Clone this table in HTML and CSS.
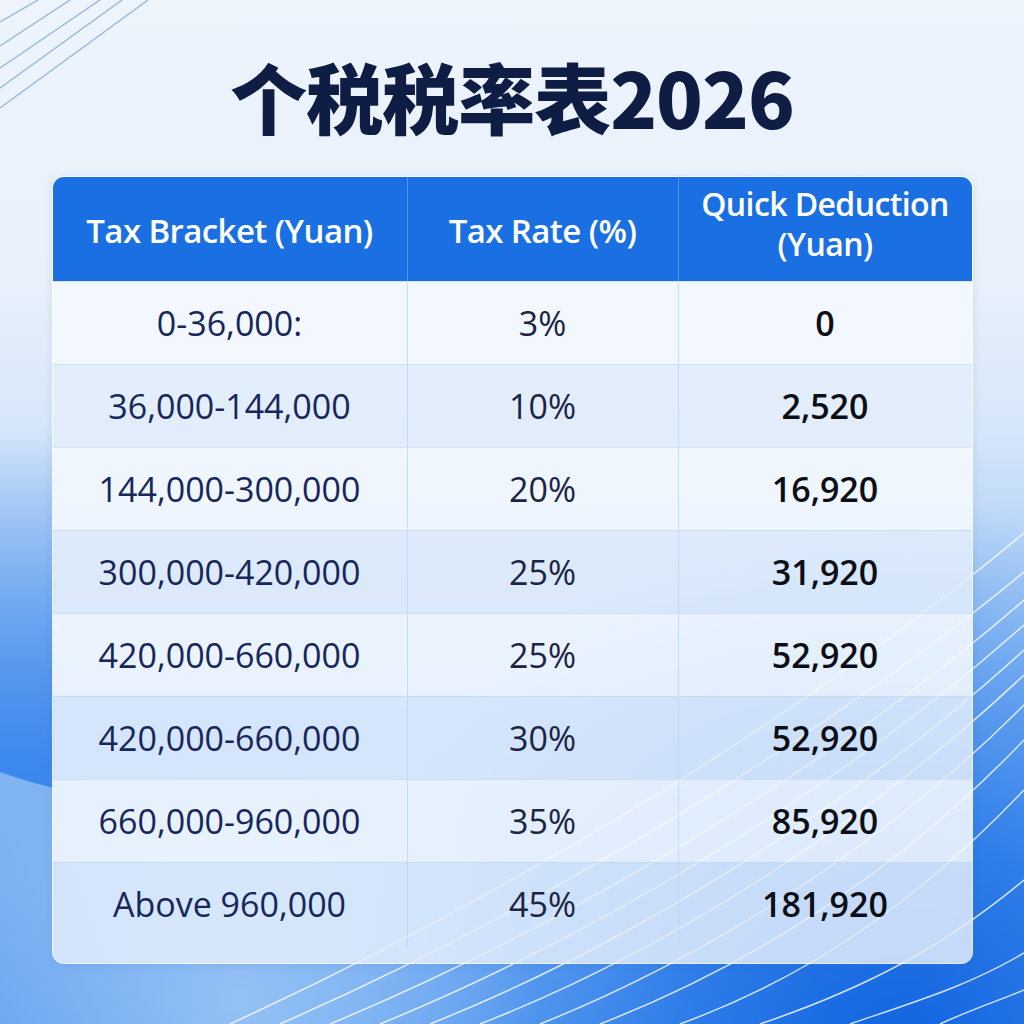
FILE: index.html
```html
<!DOCTYPE html>
<html lang="zh">
<head>
<meta charset="utf-8">
<title>个税税率表2026</title>
<link rel="stylesheet" href="styles.css">
</head>
<body>
<div class="page">
  <svg class="bg-art" width="1024" height="1024" viewBox="0 0 1024 1024" aria-hidden="true">
    <defs>
      <radialGradient id="br" cx="900" cy="1060" r="560" gradientUnits="userSpaceOnUse">
        <stop offset="0" stop-color="#0f62e0"/>
        <stop offset="0.4" stop-color="#2f7de9"/>
        <stop offset="1" stop-color="#4c95f0" stop-opacity="0"/>
      </radialGradient>
      <radialGradient id="bl" cx="240" cy="1000" r="300" gradientUnits="userSpaceOnUse">
        <stop offset="0" stop-color="#94c1f5"/>
        <stop offset="1" stop-color="#94c1f5" stop-opacity="0"/>
      </radialGradient>
      <linearGradient id="wedge" x1="0" y1="430" x2="0" y2="785" gradientUnits="userSpaceOnUse">
        <stop offset="0" stop-color="#3a86ec" stop-opacity="0"/>
        <stop offset="1" stop-color="#3a86ec"/>
      </linearGradient>
    </defs>
    <rect x="0" y="0" width="1024" height="1024" fill="url(#br)"/>
    <path d="M0 430 L54 430 L54 788 Q 28 782, 0 772 Z" fill="url(#wedge)"/>
    <rect x="0" y="0" width="1024" height="1024" fill="url(#bl)"/>
    <g fill="none" stroke="#8fb3e6" stroke-width="1.3">
      <path d="M0 22 L38 0"/>
      <path d="M0 46 L70 0"/>
      <path d="M0 68 L100 0"/>
      <path d="M0 88 L122 0"/>
      <path d="M0 108 L148 0"/>
    </g>
    <g fill="none" stroke="#ffffff" stroke-width="1.5" opacity="0.8">
      <path d="M230 1024 C 500 900, 800 720, 1024 533"/>
      <path d="M280 1024 C 540 910, 820 740, 1024 572"/>
      <path d="M330 1024 C 580 920, 840 760, 1024 600"/>
      <path d="M380 1024 C 610 930, 850 780, 1024 625"/>
      <path d="M430 1024 C 640 940, 860 800, 1024 650"/>
      <path d="M480 1024 C 670 950, 870 820, 1024 675"/>
      <path d="M540 1024 C 700 960, 880 850, 1024 705"/>
      <path d="M600 1024 C 740 970, 890 880, 1024 740"/>
      <path d="M680 1024 C 800 980, 910 910, 1024 790"/>
      <path d="M760 1024 C 860 990, 940 950, 1024 880"/>
      <path d="M850 1024 C 920 1000, 970 985, 1024 953"/>
      <path d="M940 1024 C 970 1010, 1000 1000, 1024 990"/>
    </g>
  </svg>

  <h1 class="title">个税税率表2026</h1>

  <div class="table">
    <div class="row head">
      <div class="cell c1">Tax Bracket (Yuan)</div>
      <div class="cell c2">Tax Rate (%)</div>
      <div class="cell c3 stack"><span>Quick Deduction</span><span>(Yuan)</span></div>
    </div>
    <div class="row odd">
      <div class="cell c1">0-36,000:</div>
      <div class="cell c2">3%</div>
      <div class="cell c3">0</div>
    </div>
    <div class="row even">
      <div class="cell c1">36,000-144,000</div>
      <div class="cell c2">10%</div>
      <div class="cell c3">2,520</div>
    </div>
    <div class="row odd">
      <div class="cell c1">144,000-300,000</div>
      <div class="cell c2">20%</div>
      <div class="cell c3">16,920</div>
    </div>
    <div class="row even">
      <div class="cell c1">300,000-420,000</div>
      <div class="cell c2">25%</div>
      <div class="cell c3">31,920</div>
    </div>
    <div class="row odd">
      <div class="cell c1">420,000-660,000</div>
      <div class="cell c2">25%</div>
      <div class="cell c3">52,920</div>
    </div>
    <div class="row even">
      <div class="cell c1">420,000-660,000</div>
      <div class="cell c2">30%</div>
      <div class="cell c3">52,920</div>
    </div>
    <div class="row odd">
      <div class="cell c1">660,000-960,000</div>
      <div class="cell c2">35%</div>
      <div class="cell c3">85,920</div>
    </div>
    <div class="row even last">
      <div class="cell c1">Above 960,000</div>
      <div class="cell c2">45%</div>
      <div class="cell c3">181,920</div>
    </div>
  </div>
</div>
</body>
</html>
```
FILE: styles.css
```css
html, body {
  margin: 0;
  padding: 0;
}
body {
  width: 1024px;
  height: 1024px;
  overflow: hidden;
  font-family: "Open Sans", "Noto Sans", "Noto Sans CJK SC", sans-serif;
}
.page {
  position: relative;
  width: 1024px;
  height: 1024px;
  background: linear-gradient(180deg, #edf4fc 0%, #e8f0fb 28%, #d6e6fa 42%, #b0d0f6 56%, #86b6f2 70%, #7ab0f2 86%, #66a3f0 100%);
  display: flex;
  flex-direction: column;
  align-items: center;
  box-sizing: border-box;
  padding-top: 48px;
}
.bg-art {
  position: absolute;
  left: 0;
  top: 0;
}
.title {
  position: relative;
  margin: 0;
  height: 128px;
  font-family: "Noto Sans CJK SC", "Noto Sans", sans-serif;
  font-weight: 900;
  font-size: 77px;
  line-height: 96px;
  letter-spacing: -1px;
  color: #0f1c44;
}
.table {
  position: relative;
  width: 921px;
  border-radius: 12px;
  overflow: hidden;
  background: rgba(238, 245, 253, 0.55);
  box-shadow: 0 2px 10px rgba(40, 90, 170, 0.12);
  border: 1px solid rgba(255, 255, 255, 0.75);
  box-sizing: border-box;
}
.row {
  display: grid;
  grid-template-columns: 354px 271px 1fr;
  height: 83px;
  border-top: 1px solid rgba(190, 212, 240, 0.6);
  box-sizing: border-box;
}
.row.head {
  height: 104px;
  border-top: none;
  background: #1a6fe2;
}
.row.odd {
  background: rgba(245, 249, 255, 0.74);
}
.row.even {
  background: rgba(226, 237, 252, 0.64);
}
.row.last {
  height: 101px;
  padding-bottom: 18px;
}
.cell {
  display: flex;
  align-items: center;
  justify-content: center;
  text-align: center;
  font-size: 34px;
  border-left: 1px solid rgba(190, 212, 240, 0.8);
}
.cell.c1 {
  border-left: none;
  color: #17275c;
}
.cell.c2 {
  color: #1c2544;
}
.cell.c3 {
  color: #0c0e16;
  font-weight: 600;
}
.head .cell {
  color: #ffffff;
  font-weight: 600;
  font-size: 33px;
  line-height: 44px;
  letter-spacing: -0.6px;
  border-left: 1px solid rgba(120, 170, 240, 0.6);
}
.head .cell.c1 {
  border-left: none;
  padding-top: 4px;
}
.head .cell.c2 {
  padding-top: 4px;
}
.head .cell.stack {
  flex-direction: column;
  font-size: 32px;
  line-height: 44px;
  padding-bottom: 10px;
}
.stack span {
  display: block;
  height: 40px;
  line-height: 40px;
  overflow: visible;
}
```
